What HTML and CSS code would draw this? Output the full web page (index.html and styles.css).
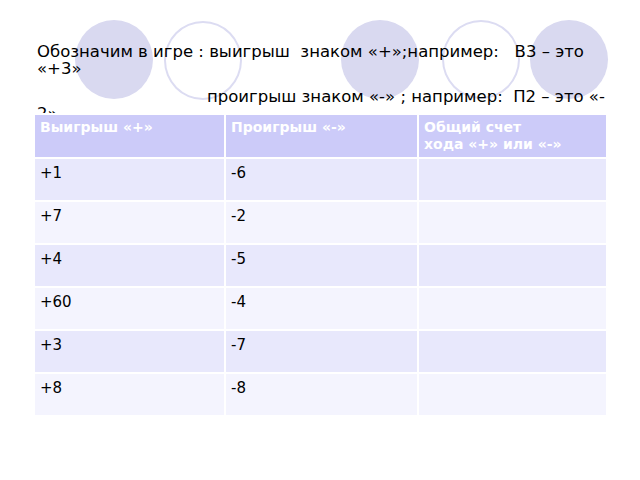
FILE: index.html
```html
<!DOCTYPE html>
<html lang="ru">
<head>
<meta charset="utf-8">
<title>Выигрыш и проигрыш</title>
<link rel="stylesheet" href="styles.css">
</head>
<body>
<div class="slide">
  <div class="decor" aria-hidden="true">
    <span class="circle filled c1"></span>
    <span class="circle ring c2"></span>
    <span class="circle filled c3"></span>
    <span class="circle ring c4"></span>
    <span class="circle filled c5"></span>
  </div>
  <div class="intro">
    <p class="line">Обозначим в игре : выигрыш  знаком «+»;например:   В3 – это «+3»</p>
    <p class="line indent">проигрыш знаком «-» ; например:  П2 – это «-<wbr>2»</p>
  </div>
  <table class="score">
    <thead>
      <tr><th>Выигрыш «+»</th><th>Проигрыш «-»</th><th>Общий счет<br>хода «+» или  «-»</th></tr>
    </thead>
    <tbody>
      <tr><td>+1</td><td>-6</td><td></td></tr>
      <tr><td>+7</td><td>-2</td><td></td></tr>
      <tr><td>+4</td><td>-5</td><td></td></tr>
      <tr><td>+60</td><td>-4</td><td></td></tr>
      <tr><td>+3</td><td>-7</td><td></td></tr>
      <tr><td>+8</td><td>-8</td><td></td></tr>
    </tbody>
  </table>
</div>
</body>
</html>
```
FILE: styles.css
```css
html, body {
  margin: 0;
  padding: 0;
  background: #ffffff;
}

.slide {
  position: relative;
  width: 640px;
  height: 480px;
  overflow: hidden;
  font-family: "DejaVu Sans", "Liberation Sans", sans-serif;
  color: #000;
}

.decor {
  position: absolute;
  inset: 0;
}

.circle {
  position: absolute;
  top: 20px;
  width: 78px;
  height: 79px;
  border-radius: 50%;
  box-sizing: border-box;
}

.filled { background: #d9d9f0; }
.ring { border: 2px solid #dcdcf2; background: transparent; }

.c1 { left: 75px; }
.c2 { left: 164px; top: 21px; }
.c3 { left: 341px; }
.c4 { left: 442px; }
.c5 { left: 530px; }

.intro {
  position: relative;
  box-sizing: border-box;
  height: 113px;
  padding: 43px 0 0 37px;
  width: 614px;
  font-size: 16.5px;
  line-height: 17px;
}

.line {
  margin: 0;
  white-space: pre-wrap;
}

.line + .line { margin-top: 11px; }

.indent { text-indent: 170px; }

.score {
  position: relative;
  margin-left: 33px;
  width: 575px;
  border-collapse: collapse;
  table-layout: fixed;
  font-size: 15px;
}

.score th, .score td {
  border: 2px solid #ffffff;
  text-align: left;
  vertical-align: top;
  padding: 4px 5px 0 5px;
}

.score th:nth-child(1) { width: 191px; }
.score th:nth-child(2) { width: 193px; }

.score th {
  background: #cccbf9;
  color: #ffffff;
  font-weight: bold;
  font-size: 14px;
  line-height: 17px;
  height: 44px;
  box-sizing: border-box;
}

.score td {
  height: 43px;
  box-sizing: border-box;
  line-height: 18px;
  padding-top: 5px;
}

.score tbody tr:nth-child(odd) td { background: #e8e8fc; }
.score tbody tr:nth-child(even) td { background: #f4f4fe; }
```
